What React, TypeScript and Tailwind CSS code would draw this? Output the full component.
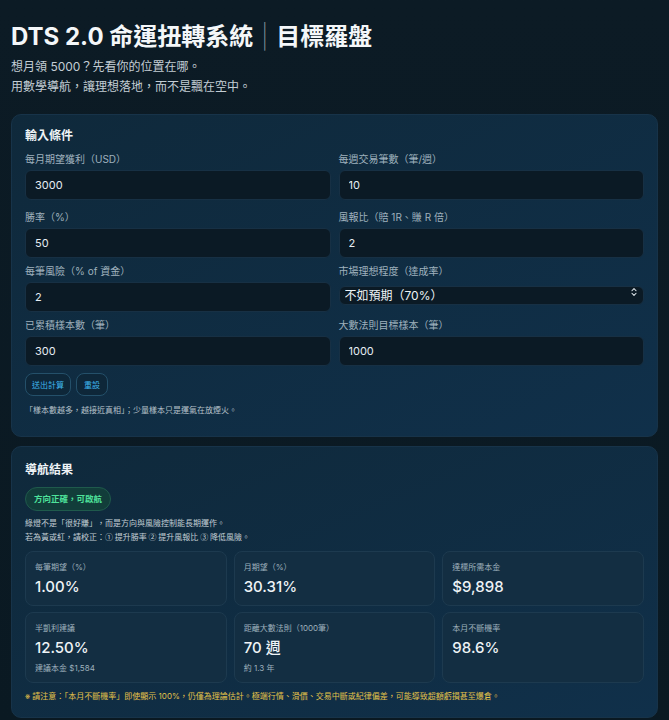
import React, { useState } from 'react';
import { ChevronsUpDown } from 'lucide-react';

const FONT = { fontFamily: 'Inter, "Noto Sans CJK TC", "Noto Sans", sans-serif' };
const CJK = { fontFamily: '"Noto Sans CJK TC", "Noto Sans", sans-serif' };

interface Field {
  label: string;
  value: string;
}

interface Stat {
  label: string;
  value: string;
  sub?: string;
}

function Input({ label, value }: Field) {
  const [v, setV] = useState(value);
  return (
    <div className="flex flex-col gap-[4px]">
      <label className="text-[10px] leading-[14px] text-[#9fb1bd]">{label}</label>
      <input
        value={v}
        onChange={e => setV(e.target.value)}
        className="h-[30px] w-full rounded-md border border-[#173044] bg-[#0b1a25] px-[9px] text-[11px] text-[#e6edf2] outline-none"
      />
    </div>
  );
}

function StatCard({ label, value, sub }: Stat) {
  return (
    <div className="rounded-lg border border-[#1d3a4f] bg-[#132e42] px-[9px] pt-[9px] pb-[8px]">
      <div className="text-[8px] leading-[12px] text-[#9fb1bd]">{label}</div>
      <div className="mt-[4px] text-[15px] leading-[20px] font-medium text-[#eef3f6]">{value}</div>
      {sub && <div className="mt-[4px] text-[8px] leading-[12px] text-[#9fb1bd]">{sub}</div>}
    </div>
  );
}

const stats: Stat[] = [
  { label: '每筆期望（%）', value: '1.00%' },
  { label: '月期望（%）', value: '30.31%' },
  { label: '達標所需本金', value: '$9,898' },
  { label: '半凱利建議', value: '12.50%', sub: '建議本金 $1,584' },
  { label: '距離大數法則（1000筆）', value: '70 週', sub: '約 1.3 年' },
  { label: '本月不斷機率', value: '98.6%' },
];

export default function App() {
  return (
    <div
      style={FONT}
      className="min-h-[720px] w-full bg-gradient-to-b from-[#0c1b25] to-[#0a1922] px-[11px] pt-[21px] pb-[8px] text-white"
    >
      <h1 className="text-[24px] leading-[32px] font-bold text-[#f4f7f9]">
        DTS 2.0 命運扭轉系統<span className="px-[8px] font-extralight text-[#7f909c]">|</span>目標羅盤
      </h1>
      <p className="mt-[4px] text-[12px] leading-[20px] text-[#c3cdd4]">想月領 5000？先看你的位置在哪。</p>
      <p className="text-[12px] leading-[20px] text-[#c3cdd4]">用數學導航，讓理想落地，而不是飄在空中。</p>

      <section className="mt-[17px] rounded-[10px] border border-[#173349] bg-gradient-to-br from-[#0f293b] to-[#10304a] px-[13px] pt-[12px] pb-[20px]">
        <h2 className="text-[12px] leading-[18px] font-bold text-[#eef3f6]">輸入條件</h2>
        <div className="mt-[7px] grid grid-cols-2 gap-x-[8px] gap-y-[6px]">
          <div className="mb-[4px]"><Input label="每月期望獲利（USD）" value="3000" /></div>
          <div className="mb-[4px]"><Input label="每週交易筆數（筆/週）" value="10" /></div>
          <Input label="勝率（%）" value="50" />
          <Input label="風報比（賠 1R、賺 R 倍）" value="2" />
          <Input label="每筆風險（% of 資金）" value="2" />
          <div className="flex flex-col gap-[4px]">
            <label className="text-[10px] leading-[14px] text-[#9fb1bd]">市場理想程度（達成率）</label>
            <div className="relative">
              <select
                defaultValue="70"
                className="h-[19px] w-full appearance-none rounded-md border border-[#173044] bg-[#0b1a25] px-[5px] text-[12px] leading-[17px] text-[#eef3f6] outline-none"
              >
                <option value="100">符合預期（100%）</option>
                <option value="70">不如預期（70%）</option>
                <option value="50">很差（50%）</option>
              </select>
              <ChevronsUpDown
                size={10}
                strokeWidth={2.5}
                className="pointer-events-none absolute right-[5px] top-[4.5px] text-[#e6edf2]"
              />
            </div>
          </div>
          <Input label="已累積樣本數（筆）" value="300" />
          <Input label="大數法則目標樣本（筆）" value="1000" />
        </div>
        <div className="mt-[7px] flex gap-[5px]">
          <button className="h-[23px] rounded-lg border border-[#24506a] bg-[#0e2739] px-[6px] text-[8px] text-[#3fb6ee]">
            送出計算
          </button>
          <button className="h-[23px] rounded-lg border border-[#24506a] bg-[#0e2739] px-[7px] text-[8px] text-[#3fb6ee]">
            重設
          </button>
        </div>
        <p className="mt-[8px] text-[8px] leading-[12px] text-[#b5c1c9]">
          「樣本數越多，越接近真相」；少量樣本只是運氣在放煙火。
        </p>
      </section>

      <section className="mt-[9px] rounded-[10px] border border-[#173349] bg-gradient-to-br from-[#0f293b] to-[#10304a] px-[13px] pt-[14px] pb-[15px]">
        <h2 className="text-[12px] leading-[18px] font-bold text-[#eef3f6]">導航結果</h2>
        <div className="mt-[8px] inline-flex h-[24px] items-center rounded-full border border-[#1f5a4c] bg-[#123d3a] px-[8px] text-[8.5px] font-semibold text-[#4ee29a]">
          方向正確，可啟航
        </div>
        <p className="mt-[5px] text-[8px] leading-[14px] text-[#c2cdd4]">
          綠燈不是「很好賺」，而是方向與風險控制能長期運作。
        </p>
        <p style={CJK} className="text-[8px] leading-[14px] text-[#c2cdd4]">
          若為黃或紅，請校正：① 提升勝率 ② 提升風報比 ③ 降低風險。
        </p>
        <div className="mt-[7px] grid grid-cols-3 gap-x-[7px] gap-y-[6px]">
          {stats.map(s => (
            <StatCard key={s.label} {...s} />
          ))}
        </div>
        <p className="mt-[7px] text-[8px] leading-[12px] text-[#e3c24a]">
          ※ 請注意：「本月不斷機率」即使顯示 100%，仍僅為理論估計。極端行情、滑價、交易中斷或紀律偏差，可能導致超額虧損甚至爆倉。
        </p>
      </section>
    </div>
  );
}
